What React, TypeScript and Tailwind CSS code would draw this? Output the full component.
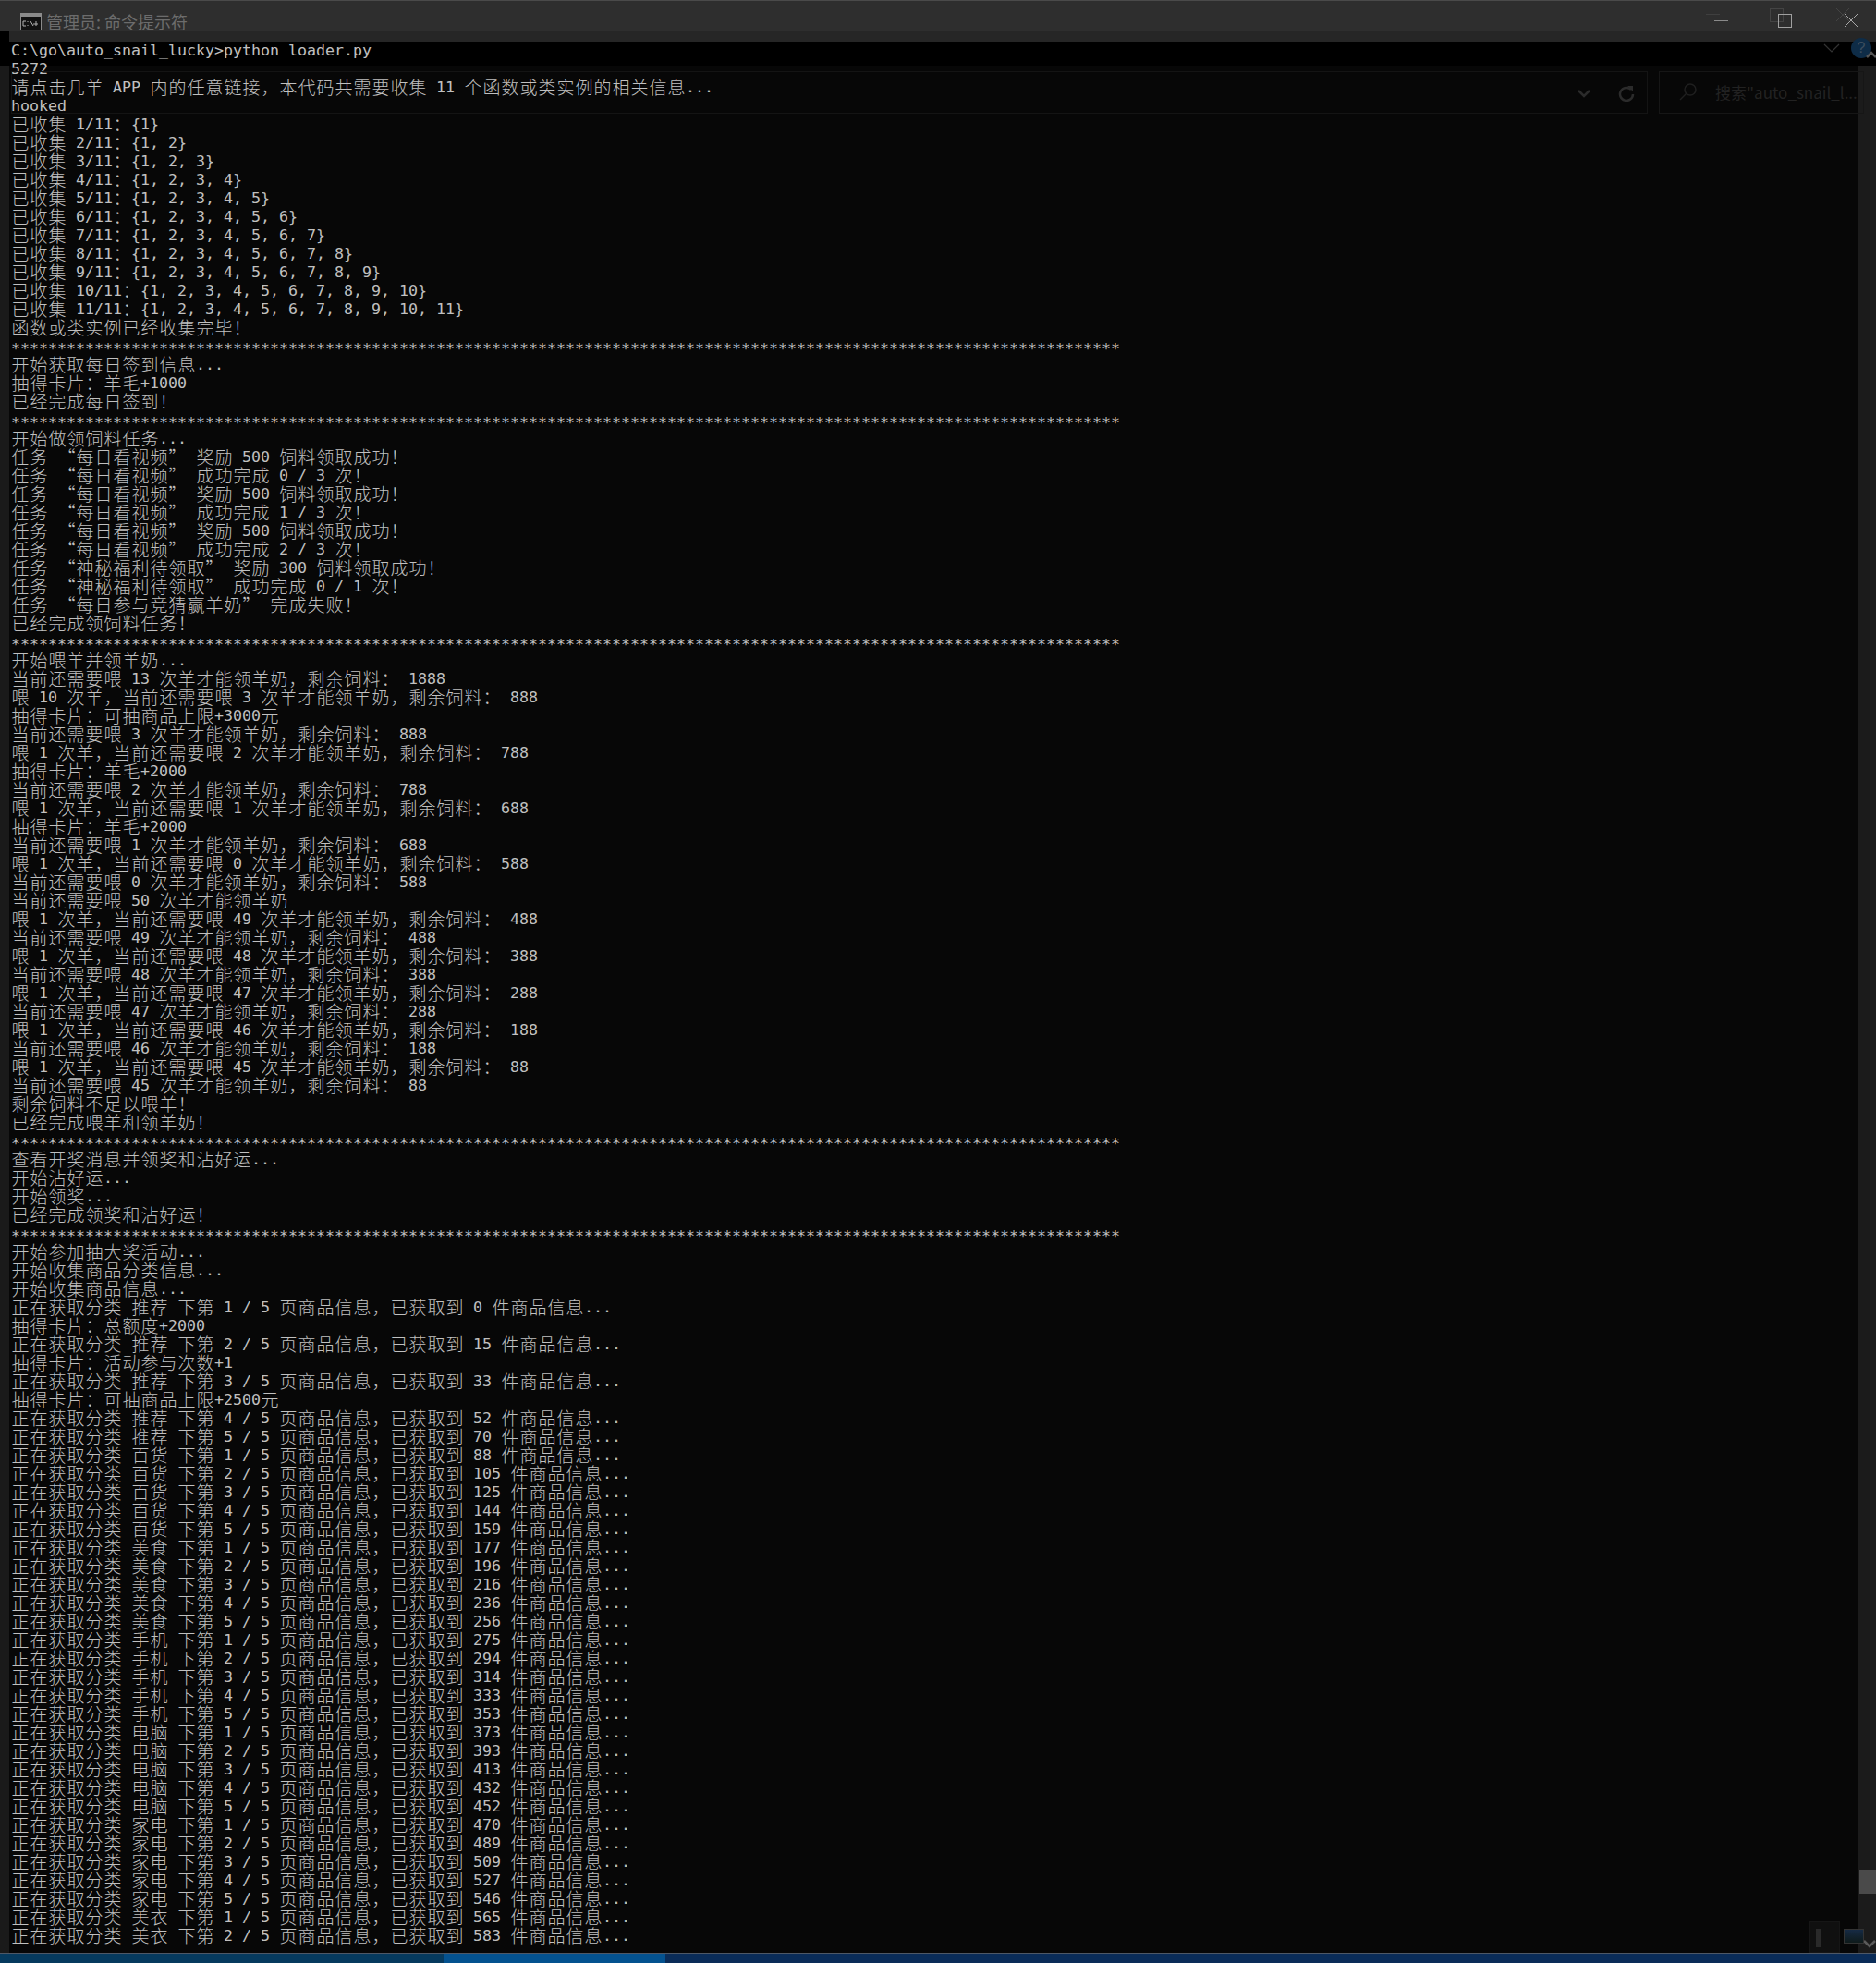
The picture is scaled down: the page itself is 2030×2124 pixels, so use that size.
const stars = "*".repeat(120);

const fetching = (cat: string, page: number, count: number) =>
  `正在获取分类 ${cat} 下第 ${page} / 5 页商品信息，已获取到 ${count} 件商品信息...`;

const lines: string[] = [
  "C:\\go\\auto_snail_lucky>python loader.py",
  "5272",
  "请点击几羊 APP 内的任意链接，本代码共需要收集 11 个函数或类实例的相关信息...",
  "hooked",
  "已收集 1/11：{1}",
  "已收集 2/11：{1, 2}",
  "已收集 3/11：{1, 2, 3}",
  "已收集 4/11：{1, 2, 3, 4}",
  "已收集 5/11：{1, 2, 3, 4, 5}",
  "已收集 6/11：{1, 2, 3, 4, 5, 6}",
  "已收集 7/11：{1, 2, 3, 4, 5, 6, 7}",
  "已收集 8/11：{1, 2, 3, 4, 5, 6, 7, 8}",
  "已收集 9/11：{1, 2, 3, 4, 5, 6, 7, 8, 9}",
  "已收集 10/11：{1, 2, 3, 4, 5, 6, 7, 8, 9, 10}",
  "已收集 11/11：{1, 2, 3, 4, 5, 6, 7, 8, 9, 10, 11}",
  "函数或类实例已经收集完毕！",
  stars,
  "开始获取每日签到信息...",
  "抽得卡片：羊毛+1000",
  "已经完成每日签到！",
  stars,
  "开始做领饲料任务...",
  "任务 “每日看视频” 奖励 500 饲料领取成功！",
  "任务 “每日看视频” 成功完成 0 / 3 次！",
  "任务 “每日看视频” 奖励 500 饲料领取成功！",
  "任务 “每日看视频” 成功完成 1 / 3 次！",
  "任务 “每日看视频” 奖励 500 饲料领取成功！",
  "任务 “每日看视频” 成功完成 2 / 3 次！",
  "任务 “神秘福利待领取” 奖励 300 饲料领取成功！",
  "任务 “神秘福利待领取” 成功完成 0 / 1 次！",
  "任务 “每日参与竞猜赢羊奶” 完成失败！",
  "已经完成领饲料任务！",
  stars,
  "开始喂羊并领羊奶...",
  "当前还需要喂 13 次羊才能领羊奶，剩余饲料： 1888",
  "喂 10 次羊，当前还需要喂 3 次羊才能领羊奶，剩余饲料： 888",
  "抽得卡片：可抽商品上限+3000元",
  "当前还需要喂 3 次羊才能领羊奶，剩余饲料： 888",
  "喂 1 次羊，当前还需要喂 2 次羊才能领羊奶，剩余饲料： 788",
  "抽得卡片：羊毛+2000",
  "当前还需要喂 2 次羊才能领羊奶，剩余饲料： 788",
  "喂 1 次羊，当前还需要喂 1 次羊才能领羊奶，剩余饲料： 688",
  "抽得卡片：羊毛+2000",
  "当前还需要喂 1 次羊才能领羊奶，剩余饲料： 688",
  "喂 1 次羊，当前还需要喂 0 次羊才能领羊奶，剩余饲料： 588",
  "当前还需要喂 0 次羊才能领羊奶，剩余饲料： 588",
  "当前还需要喂 50 次羊才能领羊奶",
  "喂 1 次羊，当前还需要喂 49 次羊才能领羊奶，剩余饲料： 488",
  "当前还需要喂 49 次羊才能领羊奶，剩余饲料： 488",
  "喂 1 次羊，当前还需要喂 48 次羊才能领羊奶，剩余饲料： 388",
  "当前还需要喂 48 次羊才能领羊奶，剩余饲料： 388",
  "喂 1 次羊，当前还需要喂 47 次羊才能领羊奶，剩余饲料： 288",
  "当前还需要喂 47 次羊才能领羊奶，剩余饲料： 288",
  "喂 1 次羊，当前还需要喂 46 次羊才能领羊奶，剩余饲料： 188",
  "当前还需要喂 46 次羊才能领羊奶，剩余饲料： 188",
  "喂 1 次羊，当前还需要喂 45 次羊才能领羊奶，剩余饲料： 88",
  "当前还需要喂 45 次羊才能领羊奶，剩余饲料： 88",
  "剩余饲料不足以喂羊！",
  "已经完成喂羊和领羊奶！",
  stars,
  "查看开奖消息并领奖和沾好运...",
  "开始沾好运...",
  "开始领奖...",
  "已经完成领奖和沾好运！",
  stars,
  "开始参加抽大奖活动...",
  "开始收集商品分类信息...",
  "开始收集商品信息...",
  fetching("推荐", 1, 0),
  "抽得卡片：总额度+2000",
  fetching("推荐", 2, 15),
  "抽得卡片：活动参与次数+1",
  fetching("推荐", 3, 33),
  "抽得卡片：可抽商品上限+2500元",
  fetching("推荐", 4, 52),
  fetching("推荐", 5, 70),
  fetching("百货", 1, 88),
  fetching("百货", 2, 105),
  fetching("百货", 3, 125),
  fetching("百货", 4, 144),
  fetching("百货", 5, 159),
  fetching("美食", 1, 177),
  fetching("美食", 2, 196),
  fetching("美食", 3, 216),
  fetching("美食", 4, 236),
  fetching("美食", 5, 256),
  fetching("手机", 1, 275),
  fetching("手机", 2, 294),
  fetching("手机", 3, 314),
  fetching("手机", 4, 333),
  fetching("手机", 5, 353),
  fetching("电脑", 1, 373),
  fetching("电脑", 2, 393),
  fetching("电脑", 3, 413),
  fetching("电脑", 4, 432),
  fetching("电脑", 5, 452),
  fetching("家电", 1, 470),
  fetching("家电", 2, 489),
  fetching("家电", 3, 509),
  fetching("家电", 4, 527),
  fetching("家电", 5, 546),
  fetching("美衣", 1, 565),
  fetching("美衣", 2, 583),
];

// console cells: latin is 10px wide, CJK is 20px wide
function ConsoleLine({ text }: { text: string }) {
  const runs = text.split(/([\u2e80-\uffef\u201c\u201d]+)/);
  return (
    <div className="flex h-[20px] whitespace-pre leading-[20px]">
      {runs.map((run, i) =>
        i % 2 === 1 ? (
          <span key={i} className="flex font-['Noto_Sans_CJK_SC',sans-serif] text-[19px] leading-[18px] font-light">
            {Array.from(run).map((ch, j) => (
              <span key={j} className="w-[20px] text-center">
                {ch}
              </span>
            ))}
          </span>
        ) : (
          <span key={i} className={run === stars ? "leading-[25px]" : ""}>
            {run}
          </span>
        ),
      )}
    </div>
  );
}

function TitleBar() {
  return (
    <div className="relative h-[45px] shrink-0 border-t border-[#4a4a4a] bg-[#2e2e2e]">
      <div className="flex h-[33px] items-center gap-[5px] pl-[22px]">
        <svg width="23" height="19" viewBox="0 0 23 19" className="mt-[11px]">
          <rect x="0.5" y="0.5" width="22" height="18" fill="#111" stroke="#8a8a8a" />
          <rect x="1" y="1" width="21" height="3" fill="#8a8a8a" />
          <path d="M3 9h3M3 9v5h3M8 9v1M8 13v1M11 9l3 5M17 9v5M14 12h5" stroke="#b0b0b0" strokeWidth="1" fill="none" />
        </svg>
        <span className="mt-[11px] font-['Noto_Sans_CJK_SC',sans-serif] text-[18px] text-[#6c6c6c]">
          管理员: 命令提示符
        </span>
      </div>
      <div className="ml-[10px] h-[11px] bg-[#262626]" />
      <div className="absolute top-[33px] left-0 h-[11px] w-[10px] bg-black" />
      <div className="absolute top-[14px] right-[169px] h-px w-[15px] bg-[#3f3f3f]" />
      <div className="absolute top-[21px] right-[160px] h-px w-[15px] bg-[#8a8a8a]" />
      <div className="absolute top-[8px] right-[100px] h-[15px] w-[15px] border border-[#444]" />
      <div className="absolute top-[14px] right-[91px] h-[15px] w-[15px] border border-[#a0a0a0]" />
      <svg width="30" height="30" viewBox="0 0 30 30" className="absolute top-[7px] right-[14px]">
        <path d="M1 1l14 14M15 1L1 15" stroke="#444" strokeWidth="1" />
        <path d="M10 7l14 14M24 7L10 21" stroke="#a8a8a8" strokeWidth="1" />
      </svg>
    </div>
  );
}

function GhostWindow() {
  return (
    <>
      <div className="absolute top-[77px] left-[12px] h-[46px] w-[1771px] border border-[#141414]" />
      <div className="absolute top-[77px] left-[1795px] h-[46px] w-[222px] border border-[#161616]">
        <svg width="22" height="22" viewBox="0 0 22 22" className="absolute top-[10px] left-[20px]">
          <circle cx="13" cy="9" r="6" fill="none" stroke="#1f1f1f" strokeWidth="1.5" />
          <path d="M9 13L2 20" stroke="#1f1f1f" strokeWidth="1.5" />
        </svg>
        <span className="absolute top-[9px] left-[60px] w-[155px] overflow-hidden whitespace-nowrap font-['Noto_Sans_CJK_SC',sans-serif] text-[17px] leading-[26px] text-[#222]">
          搜索"auto_snail_l...
        </span>
      </div>
      <svg width="14" height="10" viewBox="0 0 14 10" className="absolute top-[96px] left-[1707px]">
        <path d="M1 2l6 6 6-6" fill="none" stroke="#2b2b2b" strokeWidth="2.5" />
      </svg>
      <svg width="18" height="18" viewBox="0 0 18 18" className="absolute top-[92px] left-[1751px]">
        <path d="M14 5a7 7 0 1 0 2 5" fill="none" stroke="#2b2b2b" strokeWidth="2.5" />
        <path d="M10 1h6v6z" fill="#2b2b2b" />
      </svg>
      <svg width="18" height="12" viewBox="0 0 18 12" className="absolute top-[46px] left-[1973px]">
        <path d="M1 2l8 8 8-8" fill="none" stroke="#333" strokeWidth="1.2" />
      </svg>
      <div className="absolute top-[41px] left-[2003px] flex h-[22px] w-[22px] items-center justify-center rounded-full bg-[#0e2c47] font-['Liberation_Sans',sans-serif] text-[16px] text-[#3d4e5e]">
        ?
      </div>
      <svg width="12" height="9" viewBox="0 0 12 9" className="absolute top-[55px] left-[2019px]">
        <path d="M1 7l5-5 5 5" fill="none" stroke="#555" strokeWidth="2.5" />
      </svg>
      <div className="absolute top-[2079px] left-[1958px] h-[34px] w-[33px] border border-[#161616] bg-[#101010]">
        <div className="mt-[7px] ml-[6px] h-[20px] w-[6px] bg-[#2a2a2a]" />
      </div>
      <div className="absolute top-[2087px] left-[1995px] h-[16px] w-[22px] border border-[#333] bg-[linear-gradient(#162a44,#0e1a1a)]" />
    </>
  );
}

export default function App() {
  return (
    <div className="relative flex h-[2124px] w-[2030px] flex-col overflow-hidden bg-[#070707] font-['DejaVu_Sans_Mono',monospace] text-[16.61px] text-[#c0c0c0]">
      <TitleBar />
      <div className="flex min-h-0 flex-1">
        <div className="w-[10px] shrink-0 bg-[linear-gradient(#000_26px,#1a1a1a_26px)]" />
        <main className="min-w-0 flex-1 overflow-hidden bg-[linear-gradient(#000_26px,#070707_26px)] pl-[2px]">
          {lines.map((line, i) => (
            <ConsoleLine key={i} text={line} />
          ))}
        </main>
        <div className="relative w-[19px] shrink-0 bg-[linear-gradient(#000_26px,#1b1b1b_26px)]">
          <div className="absolute top-[1978px] right-0 h-[26px] w-[18px] bg-[#4a4a4a]" />
          <svg width="14" height="10" viewBox="0 0 14 10" className="absolute top-[2053px] right-0">
            <path d="M1 2l6 6 6-6" fill="none" stroke="#5a5a5a" strokeWidth="2.5" />
          </svg>
        </div>
      </div>
      <div className="flex h-[11px] shrink-0 border-t border-[#4e5866] bg-[#0a2c58]">
        <div className="w-[480px] bg-[#063a5e]" />
        <div className="w-[240px] bg-[#04528f]" />
      </div>
      <GhostWindow />
    </div>
  );
}
